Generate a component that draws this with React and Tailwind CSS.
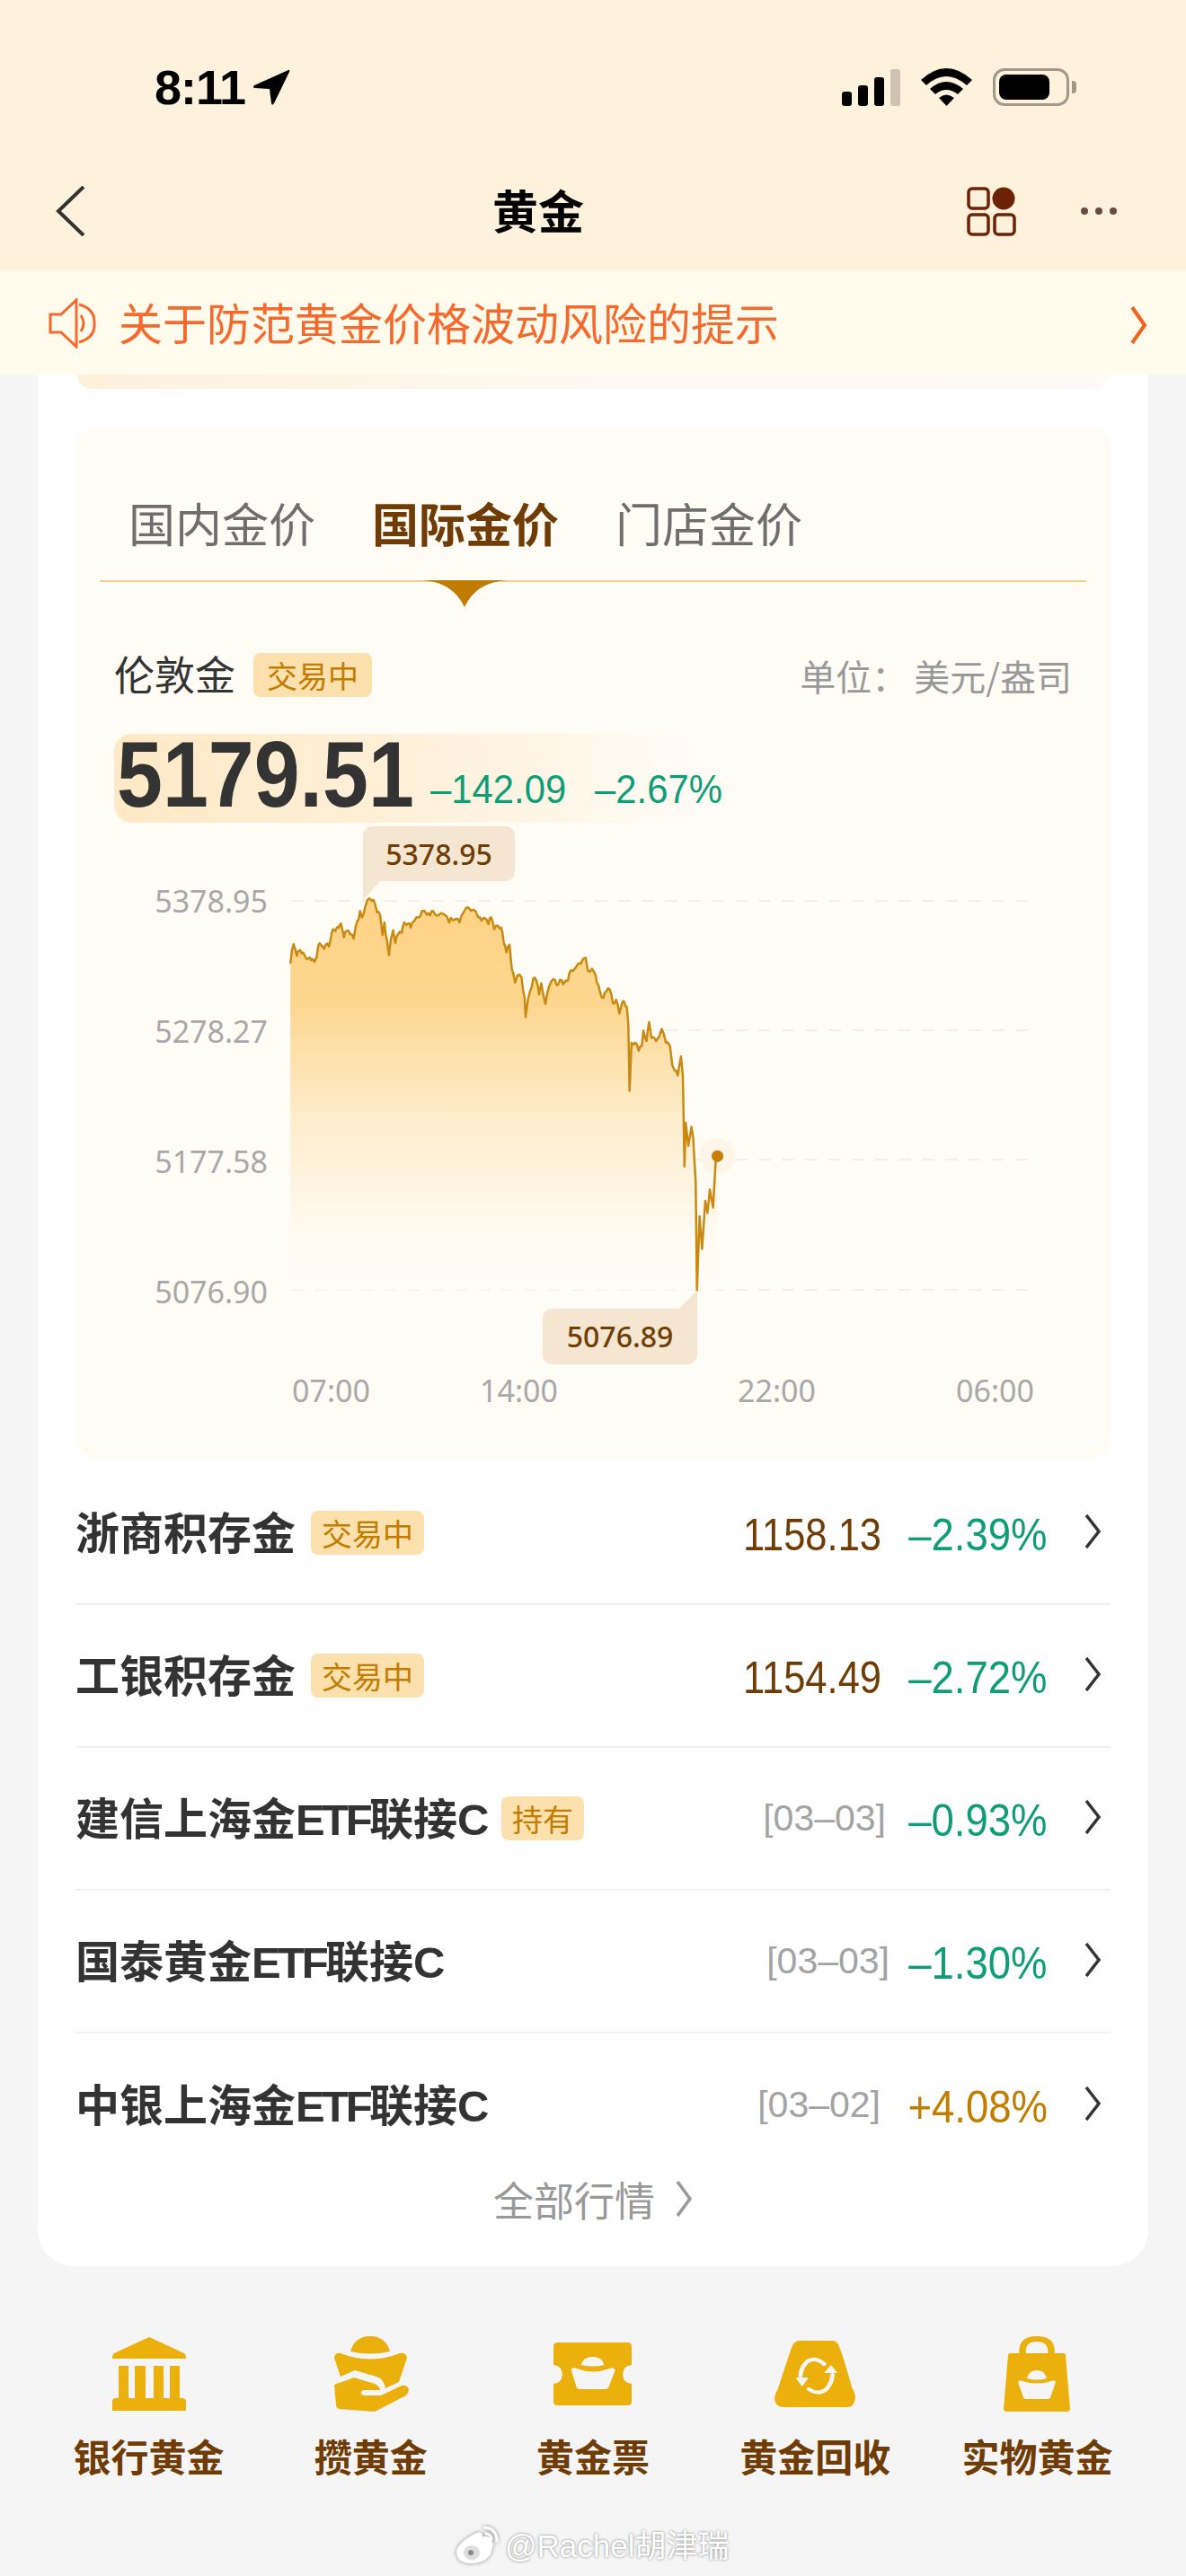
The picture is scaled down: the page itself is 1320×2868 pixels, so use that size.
import React from "react";

const sans = "font-['Liberation_Sans','Noto_Sans_CJK_SC',sans-serif]";
const noto = "font-['Noto_Sans','Noto_Sans_CJK_SC',sans-serif]";
const cjk = "font-['Noto_Sans_CJK_SC',sans-serif]";

const raw = [65,295,70,255,75,238,80,255,85,272,92,258,100,265,110,272,122,280,130,285,140,290,147,275,152,242,160,240,165,245,170,252,175,240,185,245,190,225,198,195,205,200,215,190,222,178,228,200,232,218,240,200,252,210,262,222,268,190,278,165,282,142,288,160,298,130,305,110,318,112,328,118,335,145,345,155,352,212,358,175,362,210,372,270,378,225,385,198,392,235,400,210,412,205,420,175,432,178,440,190,450,172,465,160,475,142,490,152,500,155,510,142,525,155,545,152,560,175,565,162,580,165,592,175,605,145,620,132,635,138,650,160,660,170,675,165,682,180,690,160,700,195,712,185,722,190,730,235,738,262,748,240,755,310,765,350,772,330,785,335,795,395,798,450,805,400,812,375,822,338,832,345,840,385,847,352,860,412,870,365,885,340,895,358,905,342,915,355,930,345,938,315,955,305,970,295,985,278,992,315,1005,310,1012,320,1020,350,1030,378,1040,395,1050,375,1060,370,1070,410,1080,400,1090,440,1097,415,1105,405,1113,420,1118,470,1122,665,1128,525,1140,525,1150,548,1160,535,1165,490,1175,520,1183,465,1190,510,1205,520,1222,485,1235,525,1248,535,1255,590,1262,605,1272,620,1282,565,1288,620,1293,885,1297,758,1305,825,1315,770,1320,800,1328,930,1332,1245,1340,1030,1348,1125,1358,985,1365,1020,1372,952,1382,1005,1390,875,1396,855];
const X = (z) => 300 + z / 2.8 - 84;
const Y = (z) => 960 + z / 2.613 - 916;
const pts = [];
for (let i = 0; i < raw.length; i += 2) {
  const px = X(raw[i]);
  const py = Y(raw[i + 1]);
  if (i > 0 && raw[i] < 1280) {
    const lx = X(raw[i - 2]);
    const ly = Y(raw[i - 1]);
    const gap = px - lx;
    if (gap > 2.5) {
      const mx = (lx + px) / 2;
      pts.push([mx, (ly + py) / 2 + (i % 8 === 0 ? 2.2 : -2.2)]);
    }
  }
  pts.push([px, py]);
}
const last = pts[pts.length - 1];
const line = "M" + pts.map((p) => p[0].toFixed(1) + " " + p[1].toFixed(1)).join("L");
const area = line + `L${last[0].toFixed(1)} 520L${pts[0][0].toFixed(1)} 520Z`;

const bg = "#f5f5f5";
const gold = "#ecb00c";

function Chevron({ className = "", color = "#333", w = 20, h = 38, sw = 3.5 }) {
  return (
    <svg width={w} height={h} viewBox="0 0 20 38" preserveAspectRatio="none" className={className} fill="none" stroke={color} strokeWidth={sw}>
      <path d="M3 1 L17 19 L3 37" />
    </svg>
  );
}

function Badge({ children, big }) {
  return big ? (
    <span className={`${cjk} ml-[20px] flex h-[49px] items-center rounded-[8px] bg-[#fce0ad] px-[15px] text-[34px] text-[#c27c00]`}>{children}</span>
  ) : (
    <span className={`${cjk} ml-[17px] flex h-[49px] items-center rounded-[8px] bg-[#fce0ad] px-[12px] text-[34px] text-[#c27c00]`}>{children}</span>
  );
}

function Name({ text }) {
  return (
    <span className={`${sans} pt-[4px] text-[49px] leading-none font-bold text-[#333]`}>
      {text.split(/([A-Z]+)/).map((part, i) =>
        /[A-Z]/.test(part) ? (
          <span key={i} className="tracking-[-3.5px]">
            {part}
          </span>
        ) : (
          <span key={i}>{part}</span>
        )
      )}
    </span>
  );
}

function Row({ name, badge, value, date, dateClass = "-mr-[5px]", pct, up, last }) {
  return (
    <div className={`flex h-[159px] items-center pr-[10px] ${last ? "" : "border-b-2 border-[#f1f1f1]"}`}>
      <Name text={name} />
      {badge && <Badge>{badge}</Badge>}
      <span className="ml-auto" />
      {value && (
        <span className={`${sans} inline-block origin-right scale-x-[0.87] pt-[4px] text-[50px] leading-none text-[#6f3c05]`}>{value}</span>
      )}
      {date && <span className={`${sans} ${dateClass} text-[41px] leading-none text-[#a3a3a3]`}>{date}</span>}
      <span className="flex w-[185px] justify-end">
        <span className={`${sans} inline-block origin-right scale-x-[0.91] pt-[4px] text-[50px] leading-none ${up ? "text-[#c27c00]" : "text-[#0f9d78]"}`}>{pct}</span>
      </span>
      <Chevron className="ml-[40px] -mt-[4px]" />
    </div>
  );
}

function BankIcon() {
  return (
    <svg width="82" height="82" viewBox="0 0 82 82" fill={gold}>
      <path d="M41 0 L80 18 Q82 19 82 24 H0 Q0 19 2 18 Z" />
      <path d="M7 32H18V68H7ZM25 32H37V68H25ZM46 32H57V68H46ZM64 32H75V68H64Z" />
      <path d="M4 68H78Q82 68 82 72V82H0V72Q0 68 4 68Z" />
    </svg>
  );
}
function HandIcon() {
  return (
    <svg width="84" height="84" viewBox="0 0 84 84" fill={gold}>
      <path d="M19 17 Q24 0 41 0 Q58 0 63 17 Q41 22 19 17Z" />
      <path d="M1 24 Q2 18 8 19 Q41 32 74 19 Q81 18 82 24 L73 51 L58 58 Q56 47 48 45 L24 38 L8 45Z" />
      <path d="M1 54 L23 46 L46 53 Q52 56 52 60 H36 Q30 60 31 64 Q32 66 36 66 H53 L76 55 Q82 54 84 59 Q84 63 81 66 L46 84 L6 81 Q3 80 3 76Z" />
    </svg>
  );
}
function TicketIcon() {
  return (
    <svg width="87" height="70" viewBox="0 0 71 70" preserveAspectRatio="none" fill={gold}>
      <path d="M4 0H67Q71 0 71 4V25Q63 26 63 35.5Q63 45 71 46V66Q71 70 67 70H4Q0 70 0 66V46Q8 45 8 35.5Q8 26 0 25V4Q0 0 4 0Z" />
      <path fill={bg} d="M25 25 Q27 16 36 16 Q44 16 46 25 Q36 28 25 25Z" />
      <path fill={bg} d="M16 30 Q18 27 21 29 Q36 36 51 29 Q55 27 56 31 L50 50 Q49 52 47 52 H24 Q22 52 21 50Z" />
    </svg>
  );
}
function RecycleIcon() {
  return (
    <svg width="91" height="74" viewBox="0 0 74 74" preserveAspectRatio="none">
      <path fill={gold} d="M23 0H52Q56 0 58 5 Q62 16 70 52 Q74 60 73 65 Q72 74 66 74H9Q1 74 0 65 Q0 60 3 54 Q12 20 16 6 Q18 0 23 0Z" />
      <g fill="none" stroke={bg} strokeWidth="4" strokeLinecap="round">
        <path d="M45 26 Q36 17 29 24 Q24 30 23.5 39" />
        <path d="M31 54 Q40 61 47 54 Q52 47 52.5 38" />
      </g>
      <path fill={bg} d="M19 41H31L25 51ZM45 36H57L51 27Z" />
    </svg>
  );
}
function BagIcon() {
  return (
    <svg width="74" height="84" viewBox="0 0 60 84" preserveAspectRatio="none">
      <path fill="none" stroke={gold} strokeWidth="6" d="M17 21 V17 Q17 3 30 3 Q43 3 43 17 V21" />
      <path fill={gold} d="M6 19H54Q56 19 56 22L60 81Q60 84 57 84H3Q0 84 0 81L4 22Q4 19 6 19Z" />
      <path fill={bg} d="M21 47 Q23 38 30 38 Q37 38 39 47 Q30 50 21 47Z" />
      <path fill={bg} d="M13 51 Q14 48 17 50 Q30 55 43 50 Q46 48 47 51 L42 69 Q41 70 40 70H20Q19 70 18 69Z" />
    </svg>
  );
}

const grid = [87, 231, 375, 520];
const yLabels = [
  ["5378.95", "top-[67px]"],
  ["5278.27", "top-[212px]"],
  ["5177.58", "top-[357px]"],
  ["5076.90", "top-[502px]"],
];
const xLabels = [
  ["07:00", "left-[241px]"],
  ["14:00", "left-[450px]"],
  ["22:00", "left-[737px]"],
  ["06:00", "left-[980px]"],
];

export default function App() {
  return (
    <div className="relative h-[2868px] w-[1320px] overflow-hidden bg-[#f5f5f5]">
      <header className="h-[302px] bg-[#fff2dd]">
        <div className="flex h-[194px] items-center pr-[122px] pl-[172px]">
          <span className={`${sans} text-[54px] leading-none font-bold tracking-[-1px] text-black`}>8:11</span>
          <svg width="42" height="40" viewBox="0 0 42 40" className="ml-[8px]" fill="#000">
            <path d="M40 1 Q42 0 41 3 L24 38 Q22 41 21 38 L19 22 L2 21 Q0 20 2 18Z" />
          </svg>
          <svg width="65" height="41" viewBox="0 0 65 41" className="ml-auto">
            <rect x="0" y="25" width="11" height="16" rx="3" />
            <rect x="18" y="18" width="11" height="23" rx="3" />
            <rect x="36" y="9" width="11" height="32" rx="3" />
            <rect x="54" y="0" width="11" height="41" rx="3" fill="#cdc3b2" />
          </svg>
          <svg width="57" height="42" viewBox="0 0 57 42" className="ml-[23px]">
            <path d="M0 13 Q28 -13 57 13 L51 19 Q28 -1 6 19Z" />
            <path d="M10 23 Q28 7 47 23 L41 29 Q28 19 16 29Z" />
            <path d="M20 33 Q28 26 37 33 L28.500 42Z" />
          </svg>
          <span className="ml-[23px] flex items-center">
            <span className="flex h-[42px] w-[85px] items-center rounded-[13px] border-[3px] border-[#a29888] p-[4px]">
              <span className="h-[28px] w-[56px] rounded-[8px] bg-black" />
            </span>
            <span className="ml-[3px] h-[14px] w-[5px] rounded-r-[4px] bg-[#a29888]" />
          </span>
        </div>
        <div className="flex h-[82px] items-center pr-[77px] pl-[62px]">
          <svg width="33" height="56" viewBox="0 0 33 56" fill="none" stroke="#333" strokeWidth="4">
            <path d="M31 1 L3 28 L31 55" />
          </svg>
          <span className={`${cjk} ml-[453px] -mt-[3px] text-[51px] leading-none font-bold text-black`}>黄金</span>
          <svg width="55" height="55" viewBox="0 0 55 55" className="ml-auto" fill="none" stroke="#6b2205" strokeWidth="3.500">
            <rect x="2" y="2" width="22" height="22" rx="4" />
            <circle cx="41" cy="13" r="12.500" fill="#6b2205" stroke="none" />
            <rect x="2" y="31" width="22" height="22" rx="4" />
            <rect x="31" y="31" width="22" height="22" rx="4" />
          </svg>
          <span className="ml-[72px] flex gap-[8px]">
            <span className="h-[8px] w-[8px] rounded-full bg-[#6b4a42]" />
            <span className="h-[8px] w-[8px] rounded-full bg-[#6b4a42]" />
            <span className="h-[8px] w-[8px] rounded-full bg-[#6b4a42]" />
          </span>
        </div>
      </header>

      <div className="flex h-[115px] items-center bg-[#fffcee] pr-[43px] pl-[54px]">
        <svg width="53" height="56" viewBox="0 0 53 56" fill="none" stroke="#f56a2c" strokeWidth="3">
          <path d="M2 18H14L31 2V54L14 38H2Z" />
          <path d="M34 7 Q52 12 51 28 Q52 44 34 49" />
          <path d="M36 19 Q42 28 36 37" />
        </svg>
        <span className={`${cjk} ml-[25px] -mt-[5px] text-[49px] leading-none text-[#f56a2c]`}>关于防范黄金价格波动风险的提示</span>
        <Chevron className="ml-auto mt-[4px]" color="#f0641e" h={42} w={20} sw={4} />
      </div>

      <main className="mx-[42px] h-[2106px] rounded-b-[40px] bg-white px-[42px]">
        <div className="mx-[2px] h-[16px] rounded-b-[24px] bg-gradient-to-r from-[#fdf1db] via-[#fdf8f1] to-[#fdf9f6]" />
        <section className="mt-[42px] h-[1149px] rounded-[24px] bg-[#fffcf6]">
          <div className="relative mx-[27px] flex h-[173px] items-end gap-[63px] border-b-2 border-[#f5cf8e] pb-[34px] pl-[32px]">
            <span className={`${cjk} text-[52px] leading-[60px] text-[#6e6e6e]`}>国内金价</span>
            <span className={`${cjk} text-[52px] leading-[60px] font-bold text-[#6f3c05]`}>国际金价</span>
            <span className={`${cjk} text-[52px] leading-[60px] text-[#6e6e6e]`}>门店金价</span>
            <svg width="94" height="30" viewBox="0 0 94 30" className="absolute top-[171px] left-[359px]" fill="#bf7c00">
              <path d="M0 0H94Q60 2 47 30Q34 2 0 0Z" />
            </svg>
          </div>

          <div className="mt-[79px] flex h-[49px] items-center pr-[43px] pl-[43px]">
            <span className={`${cjk} -mt-[4px] text-[45px] leading-none text-[#333]`}>伦敦金</span>
            <Badge big>交易中</Badge>
            <span className={`${cjk} ml-auto flex text-[40px] leading-none text-[#999]`}>
              <span>{"单位\uFF1A"}</span>
              <span className="ml-[7px]">美元/盎司</span>
            </span>
          </div>

          <div className="mt-[41px] ml-[43px] flex h-[99px] w-[650px] items-baseline rounded-l-[20px] bg-gradient-to-r from-[#ffe9c6] via-[#fff0d9] to-[#fffcf6] pl-[3px]">
            <span className="inline-block w-[331px]">
              <span className={`${sans} inline-block origin-left -translate-y-[4px] scale-x-[0.88] text-[104px] leading-[99px] font-bold whitespace-nowrap text-[#333]`}>5179.51</span>
            </span>
            <span className="ml-[18px] inline-block w-[152px]">
              <span className={`${sans} inline-block origin-left -translate-y-[8px] scale-x-[0.93] text-[45px] whitespace-nowrap text-[#0f9d78]`}>–142.09</span>
            </span>
            <span className="ml-[31px] inline-block">
              <span className={`${sans} inline-block origin-left -translate-y-[8px] scale-x-[0.93] text-[45px] whitespace-nowrap text-[#0f9d78]`}>–2.67%</span>
            </span>
          </div>

          <div className="relative h-[708px]">
            <svg width="1151" height="708" viewBox="0 0 1151 708" className="absolute top-0 left-0">
              <defs>
                <linearGradient id="fade" gradientUnits="userSpaceOnUse" x1="0" y1="90" x2="0" y2="520">
                  <stop offset="0" stopColor="#fdd386" />
                  <stop offset="0.25" stopColor="#fdd68e" />
                  <stop offset="0.55" stopColor="#feecca" />
                  <stop offset="0.85" stopColor="#fffaf0" />
                  <stop offset="1" stopColor="#fffcf6" />
                </linearGradient>
              </defs>
              {grid.map((y) => (
                <line key={y} x1="240" x2="1072" y1={y} y2={y} stroke="#f1efec" strokeWidth="2" strokeDasharray="14 12" />
              ))}
              <path d={area} fill="url(#fade)" />
              <circle cx={last[0]} cy={last[1]} r="20" fill="#fdf6e8" />
              <path d={line} fill="none" stroke="#c98a12" strokeWidth="2.5" strokeLinejoin="round" />
              <circle cx={last[0]} cy={last[1]} r="6.500" fill="#c77f05" />
              <path d="M320 65V86L339 65Z" fill="#f4e6d0" />
              <path d="M692 521V541H672Z" fill="#f4e6d0" />
            </svg>
            {yLabels.map(([t, top]) => (
              <span key={t} className={`${noto} absolute left-0 ${top} w-[214px] text-right text-[34px] leading-[40px] text-[#a8a8a8]`}>
                {t}
              </span>
            ))}
            {xLabels.map(([t, left]) => (
              <span key={t} className={`${noto} absolute top-[612px] ${left} text-[34px] leading-[40px] text-[#a8a8a8]`}>
                {t}
              </span>
            ))}
            <span className={`${noto} absolute top-[4px] left-[320px] flex h-[61px] w-[169px] items-center justify-center rounded-[10px] rounded-bl-none bg-[#f4e6d0] text-[32px] leading-none font-medium text-[#6f3c05]`}>
              5378.95
            </span>
            <span className={`${noto} absolute top-[541px] left-[520px] flex h-[62px] w-[172px] items-center justify-center rounded-[10px] rounded-tr-none bg-[#f4e6d0] text-[32px] leading-none font-medium text-[#6f3c05]`}>
              5076.89
            </span>
          </div>
        </section>

        <div className="mt-[4px]">
          <Row name="浙商积存金" badge="交易中" value="1158.13" pct="–2.39%" />
          <Row name="工银积存金" badge="交易中" value="1154.49" pct="–2.72%" />
          <Row name="建信上海金ETF联接C" badge="持有" date="[03–03]" pct="–0.93%" />
          <Row name="国泰黄金ETF联接C" date="[03–03]" dateClass="-mr-[9px]" pct="–1.30%" />
          <Row name="中银上海金ETF联接C" date="[03–02]" dateClass="mr-[1px]" pct="+4.08%" up last />
        </div>
        <div className="flex h-[50px] items-center justify-center">
          <span className={`${cjk} text-[45px] leading-none text-[#999]`}>全部行情</span>
          <Chevron className="ml-[22px]" color="#999" h={40} />
        </div>
      </main>

      <nav className="mx-[42px] mt-[78px] grid grid-cols-5">
        {[
          [<BankIcon key="a" />, "银行黄金"],
          [<HandIcon key="b" />, "攒黄金"],
          [<TicketIcon key="c" />, "黄金票"],
          [<RecycleIcon key="d" />, "黄金回收"],
          [<BagIcon key="e" />, "实物黄金"],
        ].map(([icon, label]) => (
          <div key={label} className="flex flex-col items-center">
            <div className="flex h-[84px] items-center">{icon}</div>
            <span className={`${cjk} mt-[26px] text-[42px] leading-[46px] font-bold text-[#6f3c05]`}>{label}</span>
          </div>
        ))}
      </nav>

      <h2 className={`${cjk} mt-[107px] pl-[54px] text-[60px] leading-[60px] font-bold text-[#222]`}>黄金基本走势</h2>

      <div className="absolute top-[2812px] left-[507px] flex items-center">
        <svg width="50" height="44" viewBox="0 0 50 44" className="drop-shadow-[0_0_2px_rgba(90,90,90,0.7)]">
          <path fill="#fff" d="M21 9 Q30 5 30 12 Q37 10 39 15 Q43 19 41 25 Q39 40 20 42 Q2 43 1 30 Q1 20 21 9Z" />
          <ellipse cx="18" cy="30" rx="9" ry="8" fill="#ddd" />
          <circle cx="17" cy="30" r="3" fill="#888" />
          <path d="M31 2 Q46 2 46 18 M33 9 Q40 9 40 16" fill="none" stroke="#fff" strokeWidth="3" />
        </svg>
        <span className={`${sans} ml-[5px] text-[35px] leading-none text-white [text-shadow:0_0_3px_rgba(80,80,80,0.75)]`}>@Rachel胡津瑞</span>
      </div>
    </div>
  );
}
